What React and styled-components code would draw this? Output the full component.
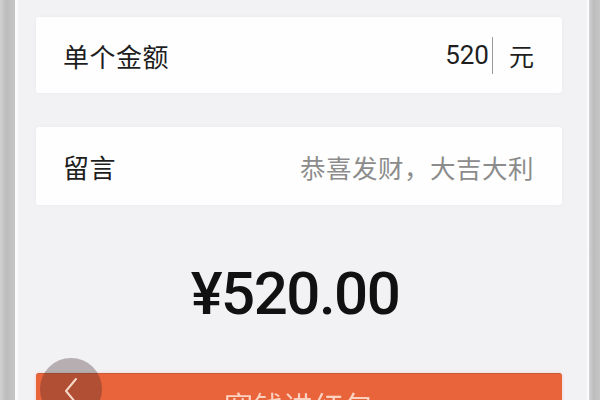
import React from "react";
import styled, { createGlobalStyle } from "styled-components";

const Global = createGlobalStyle`
  html, body { margin: 0; padding: 0; }
  body {
    width: 600px;
    height: 400px;
    overflow: hidden;
    font-family: "Noto Sans CJK SC", "Noto Sans", sans-serif;
    background: #f2f1f4;
  }
`;

const Frame = styled.div`
  display: flex;
  width: 600px;
  height: 400px;
  overflow: hidden;
`;

const Rail = styled.div`
  flex: 0 0 ${(p) => p.$w}px;
  background: linear-gradient(to right, #d2d2d2, #bdbdbd 40%, #c6c6c6);
`;

const Screen = styled.div`
  flex: 1;
  position: relative;
  display: flex;
  flex-direction: column;
  background: #f2f1f4;
  border-left: 3px solid #fbfbfb;
  border-right: 2px solid #fbfbfb;
  padding: 17px 25px 0 18px;
  & > * { flex-shrink: 0; }
`;

const Card = styled.div`
  display: flex;
  align-items: center;
  justify-content: space-between;
  height: ${(p) => p.$h}px;
  margin-top: ${(p) => p.$mt || 0}px;
  padding: 0 28px 0 27px;
  background: #fefefe;
  border-radius: 3px;
  box-shadow: 0 0 4px rgba(0, 0, 0, 0.04);
`;

const Label = styled.span`
  font-size: 26px;
  color: #1e1e1e;
  letter-spacing: 0.5px;
`;

const ValueGroup = styled.div`
  display: flex;
  align-items: center;
`;

const Digits = styled.span`
  font-family: Roboto, "Liberation Sans", sans-serif;
  font-size: 26px;
  color: #1f1f1f;
`;

const Caret = styled.span`
  display: inline-block;
  width: 1px;
  height: 37px;
  background: #9a9a9a;
  margin: 0 16px 0 3px;
`;

const Unit = styled.span`
  font-size: 25px;
  color: #1e1e1e;
`;

const Placeholder = styled.span`
  font-size: 25.5px;
  color: #8c8c8c;
  letter-spacing: 0.5px;
`;

const Amount = styled.div`
  margin-top: 59px;
  text-align: center;
  font-family: Roboto, "Liberation Sans", sans-serif;
  font-weight: 500;
  font-size: 60px;
  line-height: 60px;
  color: #111;
  letter-spacing: -1.5px;
  padding-right: 8px;
`;

const Submit = styled.div`
  margin-top: 49px;
  height: 80px;
  background: #e9633b;
  border-top: 1px solid #c95a3b;
  border-radius: 3px 3px 0 0;
  display: flex;
  justify-content: center;
  padding-top: 17px;
  box-sizing: border-box;
  box-shadow: 0 0 3px rgba(233, 99, 59, 0.25);
`;

const SubmitText = styled.span`
  font-size: 29px;
  line-height: 29px;
  color: rgba(255, 236, 226, 0.8);
  letter-spacing: 1px;
  filter: blur(0.6px);
`;

const BackBubble = styled.div`
  position: absolute;
  left: 22px;
  top: 358px;
  width: 62px;
  height: 62px;
  border-radius: 50%;
  background: rgba(60, 40, 40, 0.33);
  display: flex;
  justify-content: center;
  padding-top: 19px;
  box-sizing: border-box;
`;

export default function App() {
  return (
    <>
      <Global />
      <Frame>
        <Rail $w={15} />
        <Screen>
          <Card $h={76}>
            <Label>单个金额</Label>
            <ValueGroup>
              <Digits>520</Digits>
              <Caret />
              <Unit>元</Unit>
            </ValueGroup>
          </Card>
          <Card $h={78} $mt={34}>
            <Label>留言</Label>
            <Placeholder>恭喜发财，大吉大利</Placeholder>
          </Card>
          <Amount>¥520.00</Amount>
          <Submit>
            <SubmitText>塞钱进红包</SubmitText>
          </Submit>
          <BackBubble>
            <svg width="16" height="28" viewBox="0 0 16 28">
              <path
                d="M13 2 L3 14 L13 26"
                fill="none"
                stroke="#f6d9c8"
                strokeWidth="2"
                strokeLinecap="round"
                strokeLinejoin="round"
              />
            </svg>
          </BackBubble>
        </Screen>
        <Rail $w={11} />
      </Frame>
    </>
  );
}
